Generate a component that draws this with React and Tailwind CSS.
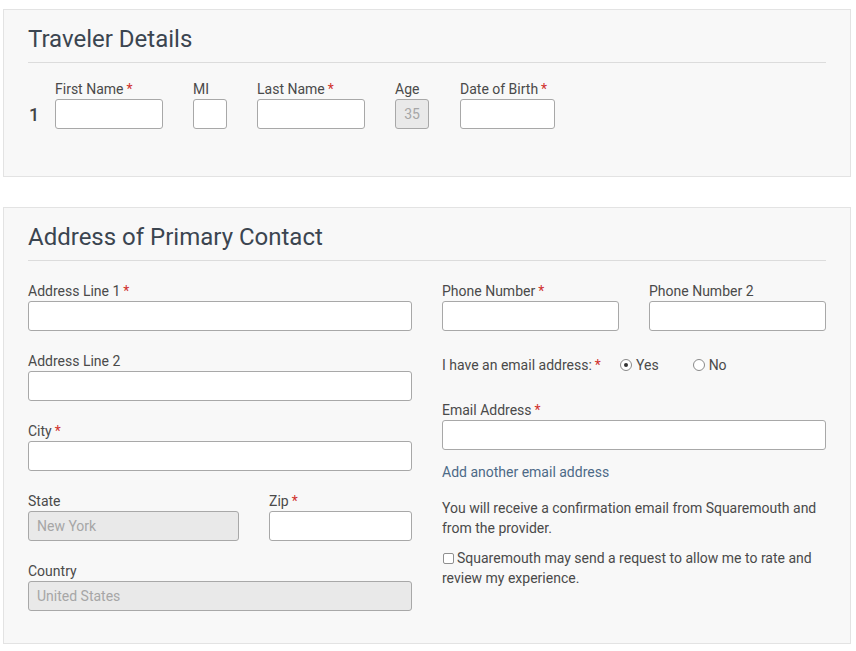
import React from "react";

// Pomocné komponenty pre formulár
const Req = () => <span className="ml-[3px] text-[#d0312d]">*</span>;

const Label = ({ children, required }) => (
  <div className="text-[14px] leading-5 text-[#4a4a4a] whitespace-nowrap">
    {children}
    {required && <Req />}
  </div>
);

const Input = ({ className = "", disabled, value }) => (
  <div
    className={`h-[30px] rounded-[3px] border border-[#a8a8a8] flex items-center px-[8px] text-[14px] ${
      disabled ? "bg-[#e9e9e9] text-[#a6a6a6]" : "bg-white"
    } ${className}`}
  >
    {value}
  </div>
);

const Field = ({ label, required, width, disabled, value, center }) => (
  <div className={width}>
    <Label required={required}>{label}</Label>
    <Input disabled={disabled} value={value} className={center ? "justify-center px-0" : ""} />
  </div>
);

const Radio = ({ checked, label }) => (
  <div className="flex items-center gap-[4px]">
    <span className="w-[12px] h-[12px] rounded-full border border-[#8a8a8a] bg-white flex items-center justify-center">
      {checked && <span className="w-[4px] h-[4px] rounded-full bg-[#333]" />}
    </span>
    <span>{label}</span>
  </div>
);

const Panel = ({ title, children, className = "" }) => (
  <div className={`border border-[#e3e3e3] bg-[#f8f8f8] px-[24px] pt-[13px] ${className}`}>
    <h2 className="text-[24px] leading-8 text-[#3b4550] pb-[7px] border-b border-[#dcdcdc]">{title}</h2>
    {children}
  </div>
);

export default function App() {
  return (
    <div
      className="bg-white w-[856px] min-h-[651px] pl-[3px] pr-[5px] pt-[9px] text-[#4a4a4a]"
      style={{ fontFamily: "Roboto, 'Liberation Sans', sans-serif" }}
    >
      {/* Traveler Details */}
      <Panel title="Traveler Details" className="pb-[47px]">
        <div className="mt-4 flex items-end">
          <div className="w-[27px] h-[30px] flex items-center pl-[1px] text-[18px] font-medium text-[#444]">1</div>
          <div className="flex gap-[30px]">
            <Field label="First Name" required width="w-[108px]" />
            <Field label="MI" width="w-[34px]" />
            <Field label="Last Name" required width="w-[108px]" />
            <Field label="Age" width="w-[34px]" disabled value="35" center />
            <Field label="Date of Birth" required width="w-[95px] ml-[1px]" />
          </div>
        </div>
      </Panel>

      {/* Address of Primary Contact */}
      <Panel title="Address of Primary Contact" className="mt-[30px] pb-[32px]">
        <div className="mt-5 grid grid-cols-2 gap-x-[30px]">
          <div className="flex flex-col gap-5">
            <Field label="Address Line 1" required />
            <Field label="Address Line 2" />
            <Field label="City" required />
            <div className="flex gap-[30px]">
              <Field label="State" width="w-[211px]" disabled value="New York" />
              <Field label="Zip" required width="flex-1" />
            </div>
            <Field label="Country" disabled value="United States" />
          </div>

          <div className="text-[14px] leading-5 text-[#4a4a4a]">
            <div className="flex gap-[30px]">
              <Field label="Phone Number" required width="flex-1" />
              <Field label="Phone Number 2" width="flex-1" />
            </div>
            <div className="mt-[24px] flex items-center">
              <span className="w-[178px]">
                I have an email address:
                <Req />
              </span>
              <Radio checked label="Yes" />
              <span className="w-[34px]" />
              <Radio label="No" />
            </div>
            <div className="mt-[25px]">
              <Field label="Email Address" required />
            </div>
            <div className="mt-[12px] text-[#4d6a87]">Add another email address</div>
            <p className="mt-[16px] pr-[4px]">
              You will receive a confirmation email from Squaremouth and from the provider.
            </p>
            <p className="mt-[10px] pr-[4px]">
              <span className="inline-block w-[11px] h-[11px] rounded-[2px] border border-[#8f8f8f] bg-white align-[-1px] mr-[3px] ml-[1px]" />
              Squaremouth may send a request to allow me to rate and review my experience.
            </p>
          </div>
        </div>
      </Panel>
    </div>
  );
}
